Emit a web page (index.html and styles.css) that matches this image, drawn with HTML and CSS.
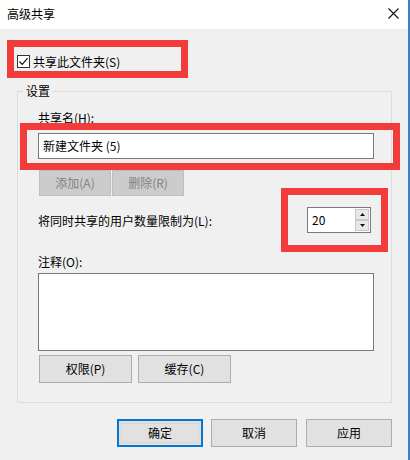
FILE: index.html
```html
<!DOCTYPE html>
<html lang="zh-CN">
<head>
<meta charset="utf-8">
<title>高级共享</title>
<link rel="stylesheet" href="styles.css">
</head>
<body>
<div class="window">
  <div class="titlebar">
    <span class="title">高级共享</span>
    <svg class="close" width="11" height="11" viewBox="0 0 11 11"><path d="M0.5 0.5 L10.5 10.5 M10.5 0.5 L0.5 10.5" stroke="#111" stroke-width="1.1" fill="none"/></svg>
  </div>
  <div class="content">
    <div class="check-row">
      <span class="checkbox"><svg width="11" height="11" viewBox="0 0 11 11"><path d="M1.5 5.5 L4.2 8.3 L9.6 2.2" stroke="#111" stroke-width="1.2" fill="none"/></svg></span>
      <span>共享此文件夹(S)</span>
    </div>
    <fieldset class="group">
      <legend>设置</legend>
      <div class="group-body">
        <div class="label">共享名(H):</div>
        <div class="field">新建文件夹 (5)</div>
        <div class="btn-row top-btns">
          <div class="btn disabled">添加(A)</div>
          <div class="btn disabled">删除(R)</div>
        </div>
        <div class="limit-row">
          <span>将同时共享的用户数量限制为(L):</span>
          <div class="spin">
            <span class="spin-value">20</span>
            <div class="spin-btns">
              <div class="spin-btn"><svg width="5" height="3" viewBox="0 0 5 3"><path d="M0 3 L2.5 0 L5 3 Z" fill="#111"/></svg></div>
              <div class="spin-btn"><svg width="5" height="3" viewBox="0 0 5 3"><path d="M0 0 L5 0 L2.5 3 Z" fill="#111"/></svg></div>
            </div>
          </div>
        </div>
        <div class="label comment-label">注释(O):</div>
        <div class="area"></div>
        <div class="btn-row bottom-btns">
          <div class="btn wide">权限(P)</div>
          <div class="btn wide">缓存(C)</div>
        </div>
      </div>
    </fieldset>
    <div class="footer">
      <div class="btn dlg default"><span class="focus">确定</span></div>
      <div class="btn dlg">取消</div>
      <div class="btn dlg last">应用</div>
    </div>
  </div>
  <div class="mark mark-share"></div>
  <div class="mark mark-name"></div>
  <div class="mark mark-limit"></div>
</div>
</body>
</html>
```

FILE: styles.css
```css
html, body {
  margin: 0;
  padding: 0;
  background: #f0f0f0;
}

body {
  font-family: "Noto Sans CJK SC", "Microsoft YaHei", sans-serif;
  font-size: 12px;
  color: #000;
}

.window {
  position: relative;
  width: 410px;
  height: 460px;
  box-sizing: border-box;
  border-right: 2px solid #3a80c6;
  background: #f0f0f0;
  overflow: hidden;
}

.titlebar {
  height: 29px;
  background: #ffffff;
  display: flex;
  align-items: center;
  justify-content: space-between;
  padding: 0 9px 0 7px;
}

.title {
  line-height: 16px;
  margin-top: -1px;
}

.close {
  display: block;
  margin-top: -3px;
}

.content {
  padding: 25px 0 0 17px;
}

.check-row {
  display: flex;
  align-items: center;
  height: 15px;
  line-height: 15px;
  gap: 3px;
}

.checkbox {
  width: 13px;
  height: 13px;
  box-sizing: border-box;
  border: 1px solid #333;
  background: #fff;
  display: flex;
  align-items: center;
  justify-content: center;
}

.checkbox svg {
  display: block;
}

.group {
  margin: 14px 0 0 0;
  width: 375px;
  box-sizing: border-box;
  border: 1px solid #dcdcdc;
  padding: 11px 0 19px 5px;
  min-inline-size: 0;
}

.group legend {
  padding: 0 3px;
  line-height: 16px;
}

.group-body {
  padding-left: 15px;
}

.label {
  line-height: 16px;
  height: 16px;
}

.field {
  margin-top: 7px;
  width: 336px;
  height: 26px;
  box-sizing: border-box;
  border: 1px solid #7a7a7a;
  background: #fff;
  line-height: 24px;
  padding-left: 4px;
}

.btn-row {
  display: flex;
}

.btn {
  box-sizing: border-box;
  border: 1px solid #adadad;
  background: #e1e1e1;
  display: flex;
  align-items: center;
  justify-content: center;
  line-height: 16px;
}

.top-btns {
  margin-top: 11px;
  padding-left: 1px;
  gap: 1px;
}

.btn.disabled {
  width: 72px;
  height: 26px;
  background: #cccccc;
  border-color: #bfbfbf;
  color: #838383;
}

.limit-row {
  margin-top: 11px;
  width: 333px;
  height: 26px;
  display: flex;
  align-items: center;
  justify-content: space-between;
}

.spin {
  width: 64px;
  height: 26px;
  box-sizing: border-box;
  border: 1px solid #7a7a7a;
  background: #fff;
  display: flex;
  align-items: center;
  justify-content: space-between;
  padding: 1px;
}

.spin-value {
  padding-left: 3px;
  line-height: 16px;
}

.spin-btns {
  display: flex;
  flex-direction: column;
  width: 14px;
  height: 100%;
}

.spin-btn {
  flex: 1;
  box-sizing: border-box;
  border: 1px solid #c8c8c8;
  background: #e8e8e8;
  display: flex;
  align-items: center;
  justify-content: center;
}

.spin-btn svg {
  display: block;
}

.comment-label {
  margin-top: 21px;
}

.area {
  margin-top: 3px;
  width: 336px;
  height: 78px;
  box-sizing: border-box;
  border: 1px solid #7a7a7a;
  background: #fff;
}

.bottom-btns {
  margin-top: 4px;
  padding-left: 1px;
  gap: 6px;
}

.btn.wide {
  width: 93px;
  height: 28px;
}

.footer {
  display: flex;
  justify-content: flex-end;
  gap: 8px;
  margin-top: 16px;
  padding-right: 16px;
}

.btn.dlg {
  width: 86px;
  height: 28px;
}

.btn.dlg.last {
  margin-left: 1px;
}

.btn.default {
  border: 2px solid #0078d7;
  background: #e1e1e1;
}

.btn.default .focus {
  display: flex;
  align-items: center;
  justify-content: center;
  width: 78px;
  height: 20px;
  box-sizing: border-box;
  border: 1px dotted #e8c9b0;
}

.mark {
  position: absolute;
  box-sizing: border-box;
  border: 7px solid #f23b3b;
}

.mark-share {
  left: 7px;
  top: 40px;
  width: 181px;
  height: 38px;
}

.mark-name {
  left: 20px;
  top: 123px;
  width: 380px;
  height: 47px;
}

.mark-limit {
  left: 281px;
  top: 188px;
  width: 107px;
  height: 64px;
}
```
